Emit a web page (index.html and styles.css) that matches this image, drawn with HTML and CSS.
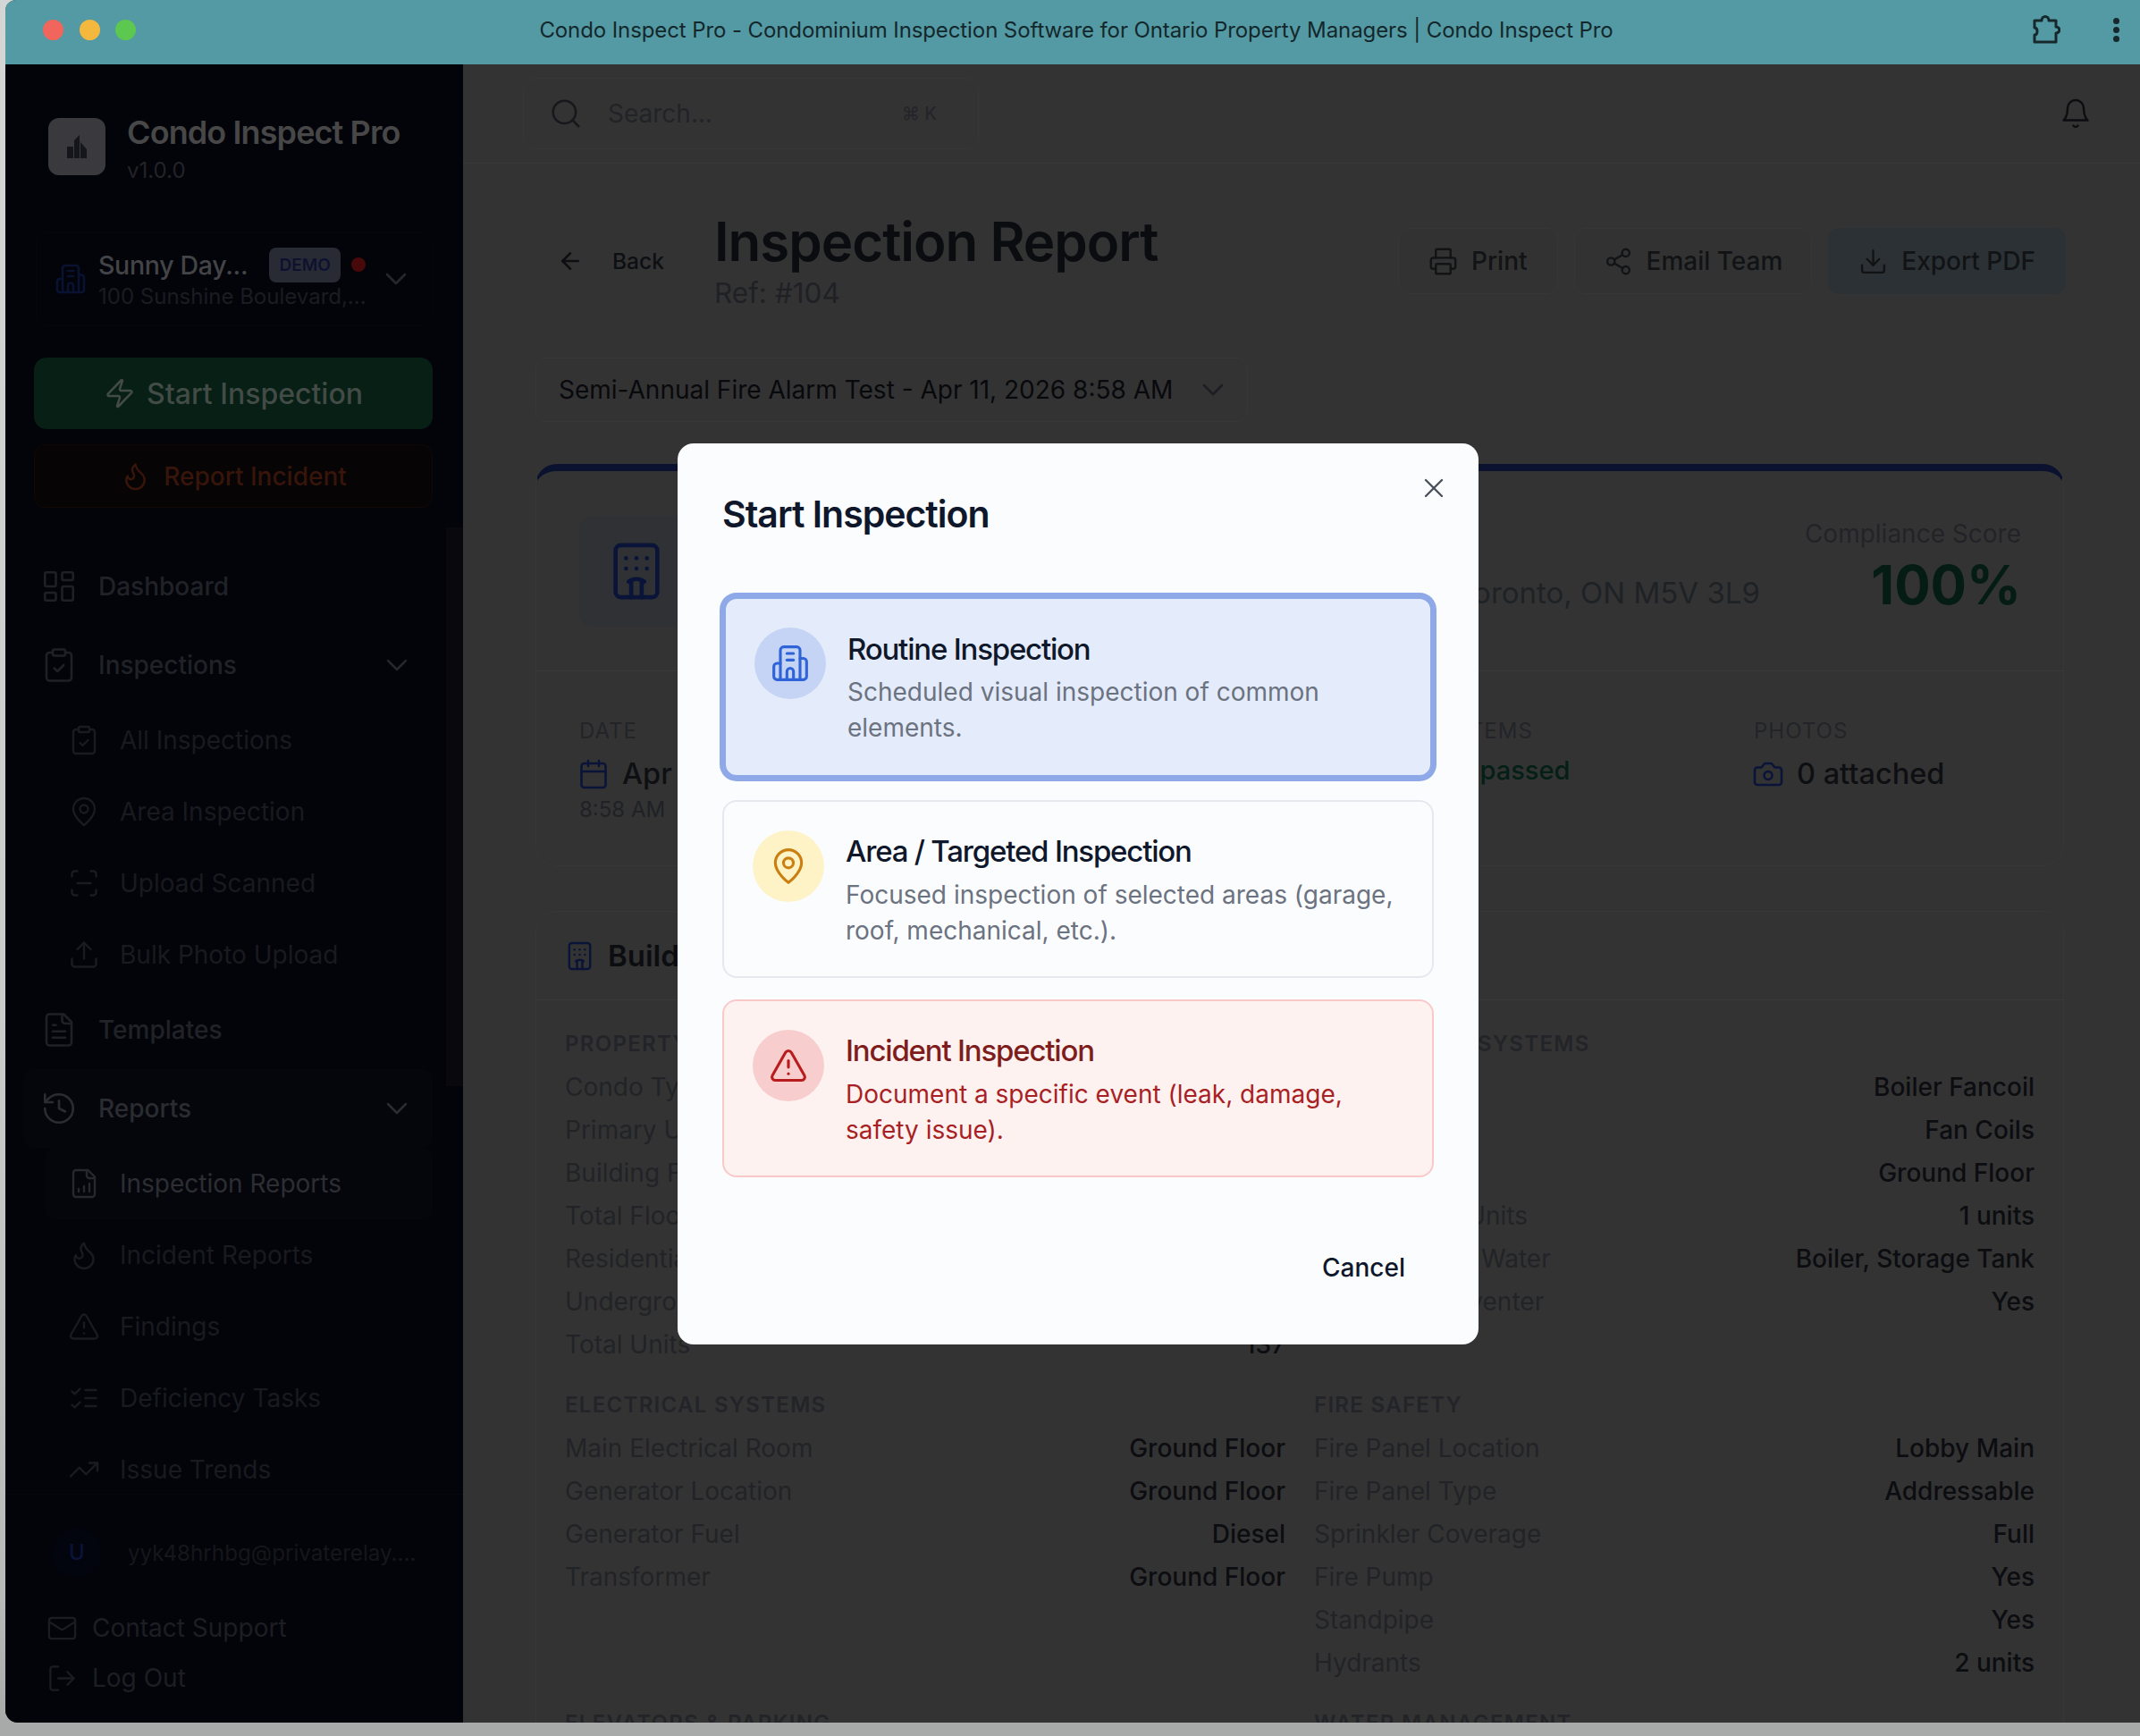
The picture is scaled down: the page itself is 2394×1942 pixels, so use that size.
FILE: index.html
```html
<!DOCTYPE html>
<html lang="en">
<head>
    <meta charset="UTF-8">
    <meta name="viewport" content="width=device-width, initial-scale=1.0">
    <title>Condo Inspect Pro</title>
    <link rel="stylesheet" href="styles.css">
</head>
<body>
    <svg class="sprite" xmlns="http://www.w3.org/2000/svg">
        <symbol id="i-search" viewBox="0 0 24 24"><circle cx="11" cy="11" r="8"/><path d="m21 21-4.3-4.3"/></symbol>
        <symbol id="i-bell" viewBox="0 0 24 24"><path d="M6 8a6 6 0 0 1 12 0c0 7 3 9 3 9H3s3-2 3-9"/><path d="M10.3 21a1.94 1.94 0 0 0 3.4 0"/></symbol>
        <symbol id="i-back" viewBox="0 0 24 24"><path d="m12 19-7-7 7-7"/><path d="M19 12H5"/></symbol>
        <symbol id="i-print" viewBox="0 0 24 24"><path d="M6 18H4a2 2 0 0 1-2-2v-5a2 2 0 0 1 2-2h16a2 2 0 0 1 2 2v5a2 2 0 0 1-2 2h-2"/><path d="M6 9V3a1 1 0 0 1 1-1h10a1 1 0 0 1 1 1v6"/><rect x="6" y="14" width="12" height="8" rx="1"/></symbol>
        <symbol id="i-share" viewBox="0 0 24 24"><circle cx="18" cy="5" r="3"/><circle cx="6" cy="12" r="3"/><circle cx="18" cy="19" r="3"/><path d="m8.59 13.51 6.83 3.98"/><path d="m15.41 6.51-6.82 3.98"/></symbol>
        <symbol id="i-download" viewBox="0 0 24 24"><path d="M21 15v4a2 2 0 0 1-2 2H5a2 2 0 0 1-2-2v-4"/><path d="m7 10 5 5 5-5"/><path d="M12 15V3"/></symbol>
        <symbol id="i-chevron" viewBox="0 0 24 24"><path d="m6 9 6 6 6-6"/></symbol>
        <symbol id="i-zap" viewBox="0 0 24 24"><path d="M4 14a1 1 0 0 1-.78-1.63l9.9-10.2a.5.5 0 0 1 .86.46l-1.92 6.02A1 1 0 0 0 13 10h7a1 1 0 0 1 .78 1.63l-9.9 10.2a.5.5 0 0 1-.86-.46l1.92-6.02A1 1 0 0 0 11 14z"/></symbol>
        <symbol id="i-flame" viewBox="0 0 24 24"><path d="M8.5 14.5A2.5 2.5 0 0 0 11 12c0-1.38-.5-2-1-3-1.072-2.143-.224-4.054 2-6 .5 2.5 2 4.9 4 6.5 2 1.6 3 3.5 3 5.5a7 7 0 1 1-14 0c0-1.153.433-2.294 1-3a2.5 2.5 0 0 0 2.5 2.5z"/></symbol>
        <symbol id="i-dash" viewBox="0 0 24 24"><rect x="3" y="3" width="7" height="9" rx="1"/><rect x="14" y="3" width="7" height="5" rx="1"/><rect x="14" y="12" width="7" height="9" rx="1"/><rect x="3" y="16" width="7" height="5" rx="1"/></symbol>
        <symbol id="i-clip" viewBox="0 0 24 24"><rect x="8" y="2" width="8" height="4" rx="1"/><path d="M16 4h2a2 2 0 0 1 2 2v14a2 2 0 0 1-2 2H6a2 2 0 0 1-2-2V6a2 2 0 0 1 2-2h2"/><path d="m9 14 2 2 4-4"/></symbol>
        <symbol id="i-pin" viewBox="0 0 24 24"><path d="M20 10c0 6-8 12-8 12s-8-6-8-12a8 8 0 0 1 16 0Z"/><circle cx="12" cy="10" r="3"/></symbol>
        <symbol id="i-scan" viewBox="0 0 24 24"><path d="M3 7V5a2 2 0 0 1 2-2h2"/><path d="M17 3h2a2 2 0 0 1 2 2v2"/><path d="M21 17v2a2 2 0 0 1-2 2h-2"/><path d="M7 21H5a2 2 0 0 1-2-2v-2"/><path d="M7 12h10"/></symbol>
        <symbol id="i-upload" viewBox="0 0 24 24"><path d="M21 15v4a2 2 0 0 1-2 2H5a2 2 0 0 1-2-2v-4"/><path d="m17 8-5-5-5 5"/><path d="M12 3v12"/></symbol>
        <symbol id="i-file" viewBox="0 0 24 24"><path d="M15 2H6a2 2 0 0 0-2 2v16a2 2 0 0 0 2 2h12a2 2 0 0 0 2-2V7Z"/><path d="M14 2v4a2 2 0 0 0 2 2h4"/><path d="M10 9H8"/><path d="M16 13H8"/><path d="M16 17H8"/></symbol>
        <symbol id="i-history" viewBox="0 0 24 24"><path d="M3 12a9 9 0 1 0 9-9 9.75 9.75 0 0 0-6.74 2.74L3 8"/><path d="M3 3v5h5"/><path d="M12 7v5l4 2"/></symbol>
        <symbol id="i-chart" viewBox="0 0 24 24"><path d="M15 2H6a2 2 0 0 0-2 2v16a2 2 0 0 0 2 2h12a2 2 0 0 0 2-2V7Z"/><path d="M14 2v4a2 2 0 0 0 2 2h4"/><path d="M8 18v-2"/><path d="M12 18v-4"/><path d="M16 18v-6"/></symbol>
        <symbol id="i-alert" viewBox="0 0 24 24"><path d="m21.73 18-8-14a2 2 0 0 0-3.48 0l-8 14A2 2 0 0 0 4 21h16a2 2 0 0 0 1.73-3"/><path d="M12 9v4"/><path d="M12 17h.01"/></symbol>
        <symbol id="i-tasks" viewBox="0 0 24 24"><path d="m3 17 2 2 4-4"/><path d="m3 7 2 2 4-4"/><path d="M13 6h8"/><path d="M13 12h8"/><path d="M13 18h8"/></symbol>
        <symbol id="i-trend" viewBox="0 0 24 24"><path d="M22 7 13.5 15.5l-5-5L2 17"/><path d="M16 7h6v6"/></symbol>
        <symbol id="i-mail" viewBox="0 0 24 24"><rect x="2" y="4" width="20" height="16" rx="2"/><path d="m22 7-8.97 5.7a1.94 1.94 0 0 1-2.06 0L2 7"/></symbol>
        <symbol id="i-logout" viewBox="0 0 24 24"><path d="M9 21H5a2 2 0 0 1-2-2V5a2 2 0 0 1 2-2h4"/><path d="m16 17 5-5-5-5"/><path d="M21 12H9"/></symbol>
        <symbol id="i-building" viewBox="0 0 24 24"><path d="M6 22V4a2 2 0 0 1 2-2h8a2 2 0 0 1 2 2v18Z"/><path d="M6 12H4a2 2 0 0 0-2 2v6a2 2 0 0 0 2 2h2"/><path d="M18 9h2a2 2 0 0 1 2 2v9a2 2 0 0 1-2 2h-2"/><path d="M10 6h4"/><path d="M10 10h4"/><path d="M10 22v-5a2 2 0 0 1 4 0v5"/></symbol>
        <symbol id="i-hotel" viewBox="0 0 24 24"><rect x="4" y="2" width="16" height="20" rx="2"/><path d="M10 22v-6.57"/><path d="M14 15.43V22"/><path d="M15 16a5 5 0 0 0-6 0"/><path d="M8 7h.01"/><path d="M12 7h.01"/><path d="M16 7h.01"/><path d="M8 11h.01"/><path d="M12 11h.01"/><path d="M16 11h.01"/></symbol>
        <symbol id="i-calendar" viewBox="0 0 24 24"><path d="M8 2v4"/><path d="M16 2v4"/><rect x="3" y="4" width="18" height="18" rx="2"/><path d="M3 10h18"/></symbol>
        <symbol id="i-camera" viewBox="0 0 24 24"><path d="M14.5 4h-5L7 7H4a2 2 0 0 0-2 2v9a2 2 0 0 0 2 2h16a2 2 0 0 0 2-2V9a2 2 0 0 0-2-2h-3z"/><circle cx="12" cy="13" r="3"/></symbol>
        <symbol id="i-x" viewBox="0 0 24 24"><path d="M18 6 6 18"/><path d="m6 6 12 12"/></symbol>
    </svg>

    <div class="window">
        <div class="titlebar">
            <div class="lights">
                <span class="light red"></span>
                <span class="light yellow"></span>
                <span class="light green"></span>
            </div>
            <div class="window-title">Condo Inspect Pro - Condominium Inspection Software for Ontario Property Managers | Condo Inspect Pro</div>
            <svg class="puzzle" viewBox="0 0 32 36"><path d="M3 8h8c0-6 8-6 8 0h8v7c5 0 5 7 0 7v10H3v-8c4 0 4-8 0-8z"/></svg>
            <div class="kebab"><span></span><span></span><span></span></div>
        </div>

        <div class="app">
            <aside class="sidebar">
                <div class="scroll-track"></div>
                <div class="brand">
                    <div class="brand-logo">
                        <svg viewBox="0 0 24 28" class="brand-mark"><path d="M1 14h7v13H1zM9 7l6-6v26H9zM16 9l7 8v10h-7z"/></svg>
                    </div>
                    <div>
                        <div class="brand-name">Condo Inspect Pro</div>
                        <div class="brand-version">v1.0.0</div>
                    </div>
                </div>

                <div class="property-picker">
                    <svg class="ico picker-icon"><use href="#i-building"/></svg>
                    <div class="picker-text">
                        <div class="picker-top">
                            <span class="picker-name">Sunny Day...</span>
                            <span class="badge">DEMO</span>
                            <span class="dot"></span>
                        </div>
                        <div class="picker-addr">100 Sunshine Boulevard,...</div>
                    </div>
                    <svg class="ico picker-chevron"><use href="#i-chevron"/></svg>
                </div>

                <button class="btn-start"><svg class="ico"><use href="#i-zap"/></svg>Start Inspection</button>
                <button class="btn-incident"><svg class="ico"><use href="#i-flame"/></svg>Report Incident</button>

                <nav class="nav">
                    <a class="nav-item"><svg class="ico"><use href="#i-dash"/></svg>Dashboard</a>
                    <a class="nav-item"><svg class="ico"><use href="#i-clip"/></svg>Inspections<svg class="ico nav-chevron"><use href="#i-chevron"/></svg></a>
                    <a class="nav-sub"><svg class="ico"><use href="#i-clip"/></svg>All Inspections</a>
                    <a class="nav-sub"><svg class="ico"><use href="#i-pin"/></svg>Area Inspection</a>
                    <a class="nav-sub"><svg class="ico"><use href="#i-scan"/></svg>Upload Scanned</a>
                    <a class="nav-sub"><svg class="ico"><use href="#i-upload"/></svg>Bulk Photo Upload</a>
                    <a class="nav-item"><svg class="ico"><use href="#i-file"/></svg>Templates</a>
                    <a class="nav-item active"><svg class="ico"><use href="#i-history"/></svg>Reports<svg class="ico nav-chevron"><use href="#i-chevron"/></svg></a>
                    <a class="nav-sub active"><svg class="ico"><use href="#i-chart"/></svg>Inspection Reports</a>
                    <a class="nav-sub"><svg class="ico"><use href="#i-flame"/></svg>Incident Reports</a>
                    <a class="nav-sub"><svg class="ico"><use href="#i-alert"/></svg>Findings</a>
                    <a class="nav-sub"><svg class="ico"><use href="#i-tasks"/></svg>Deficiency Tasks</a>
                    <a class="nav-sub"><svg class="ico"><use href="#i-trend"/></svg>Issue Trends</a>
                </nav>

                <div class="side-footer">
                    <div class="user-row">
                        <span class="avatar">U</span>
                        <span class="user-mail">yyk48hrhbg@privaterelay....</span>
                    </div>
                    <a class="foot-link"><svg class="ico"><use href="#i-mail"/></svg>Contact Support</a>
                    <a class="foot-link"><svg class="ico"><use href="#i-logout"/></svg>Log Out</a>
                </div>
            </aside>

            <main class="main">
                <header class="topbar">
                    <div class="search">
                        <svg class="ico"><use href="#i-search"/></svg>
                        <span class="search-text">Search...</span>
                        <span class="kbd">⌘ K</span>
                    </div>
                    <svg class="ico bell"><use href="#i-bell"/></svg>
                </header>

                <div class="content">
                    <div class="page-head">
                        <a class="back"><svg class="ico"><use href="#i-back"/></svg>Back</a>
                        <div class="page-title">
                            <h1>Inspection Report</h1>
                            <div class="ref">Ref: #104</div>
                        </div>
                        <div class="actions">
                            <button class="btn-outline"><svg class="ico"><use href="#i-print"/></svg>Print</button>
                            <button class="btn-outline btn-email"><svg class="ico"><use href="#i-share"/></svg>Email Team</button>
                            <button class="btn-outline btn-export"><svg class="ico"><use href="#i-download"/></svg>Export PDF</button>
                        </div>
                    </div>

                    <div class="report-select">
                        <span>Semi-Annual Fire Alarm Test - Apr 11, 2026 8:58 AM</span>
                        <svg class="ico"><use href="#i-chevron"/></svg>
                    </div>

                    <section class="report-card">
                        <div class="report-top">
                            <div class="report-logo"><svg class="ico"><use href="#i-hotel"/></svg></div>
                            <div class="report-info">
                                <div class="report-addr">100 Sunshine Boulevard, Toronto, ON M5V 3L9</div>
                            </div>
                            <div class="score">
                                <div class="score-label">Compliance Score</div>
                                <div class="score-value">100%</div>
                            </div>
                        </div>
                        <div class="stats">
                            <div>
                                <div class="stat-label">DATE</div>
                                <div class="stat-value"><svg class="ico"><use href="#i-calendar"/></svg>Apr 11, 2026</div>
                                <div class="stat-sub">8:58 AM</div>
                            </div>
                            <div>
                                <div class="stat-label">INSPECTOR</div>
                                <div class="stat-value">Property Manager</div>
                            </div>
                            <div class="stat-items">
                                <div class="stat-label">PASSED ITEMS</div>
                                <div class="stat-passed">12 of 12 passed</div>
                            </div>
                            <div>
                                <div class="stat-label">PHOTOS</div>
                                <div class="stat-value"><svg class="ico"><use href="#i-camera"/></svg>0 attached</div>
                            </div>
                        </div>
                    </section>

                    <section class="details-card">
                        <div class="details-head">
                            <svg class="ico"><use href="#i-hotel"/></svg>
                            <h3>Building Details</h3>
                        </div>
                        <div class="details-grid">
                            <div class="group">
                                <h4>PROPERTY</h4>
                                <div class="row"><span>Condo Type</span><b>High Rise</b></div>
                                <div class="row"><span>Primary Use</span><b>Residential</b></div>
                                <div class="row"><span>Building Form</span><b>Tower</b></div>
                                <div class="row"><span>Total Floors</span><b>24</b></div>
                                <div class="row"><span>Residential Floors</span><b>22</b></div>
                                <div class="row"><span>Underground Levels</span><b>2</b></div>
                                <div class="row"><span>Total Units</span><b>137</b></div>
                            </div>
                            <div class="group">
                                <h4>MECHANICAL SYSTEMS</h4>
                                <div class="row"><span>Heating Type</span><b>Boiler Fancoil</b></div>
                                <div class="row"><span>Cooling Type</span><b>Fan Coils</b></div>
                                <div class="row"><span>Boiler Room</span><b>Ground Floor</b></div>
                                <div class="row"><span>Make-up Air Units</span><b>1 units</b></div>
                                <div class="row"><span>Domestic Hot Water</span><b>Boiler, Storage Tank</b></div>
                                <div class="row"><span>Backflow Preventer</span><b>Yes</b></div>
                            </div>
                            <div class="group">
                                <h4>ELECTRICAL SYSTEMS</h4>
                                <div class="row"><span>Main Electrical Room</span><b>Ground Floor</b></div>
                                <div class="row"><span>Generator Location</span><b>Ground Floor</b></div>
                                <div class="row"><span>Generator Fuel</span><b>Diesel</b></div>
                                <div class="row"><span>Transformer</span><b>Ground Floor</b></div>
                            </div>
                            <div class="group">
                                <h4>FIRE SAFETY</h4>
                                <div class="row"><span>Fire Panel Location</span><b>Lobby Main</b></div>
                                <div class="row"><span>Fire Panel Type</span><b>Addressable</b></div>
                                <div class="row"><span>Sprinkler Coverage</span><b>Full</b></div>
                                <div class="row"><span>Fire Pump</span><b>Yes</b></div>
                                <div class="row"><span>Standpipe</span><b>Yes</b></div>
                                <div class="row"><span>Hydrants</span><b>2 units</b></div>
                            </div>
                            <div class="group">
                                <h4>ELEVATORS &amp; PARKING</h4>
                            </div>
                            <div class="group">
                                <h4>WATER MANAGEMENT</h4>
                            </div>
                        </div>
                    </section>
                </div>
            </main>

            <div class="backdrop">
                <div class="modal">
                    <svg class="ico modal-close"><use href="#i-x"/></svg>
                    <h2>Start Inspection</h2>
                    <div class="options">
                        <div class="option routine">
                            <span class="opt-icon"><svg class="ico"><use href="#i-building"/></svg></span>
                            <div>
                                <div class="opt-title">Routine Inspection</div>
                                <div class="opt-desc">Scheduled visual inspection of common elements.</div>
                            </div>
                        </div>
                        <div class="option area">
                            <span class="opt-icon"><svg class="ico"><use href="#i-pin"/></svg></span>
                            <div>
                                <div class="opt-title">Area / Targeted Inspection</div>
                                <div class="opt-desc">Focused inspection of selected areas (garage, roof, mechanical, etc.).</div>
                            </div>
                        </div>
                        <div class="option incident">
                            <span class="opt-icon"><svg class="ico"><use href="#i-alert"/></svg></span>
                            <div>
                                <div class="opt-title">Incident Inspection</div>
                                <div class="opt-desc">Document a specific event (leak, damage, safety issue).</div>
                            </div>
                        </div>
                    </div>
                    <div class="modal-foot">
                        <button class="btn-cancel">Cancel</button>
                    </div>
                </div>
            </div>
        </div>
    </div>
</body>
</html>
```

FILE: styles.css
```css
* {
    box-sizing: border-box;
}

html, body {
    height: 100%;
}

body {
    margin: 0;
    overflow: hidden;
    font-family: 'Inter', 'Liberation Sans', sans-serif;
    background: linear-gradient(180deg, #d4d6d6 0%, #c9cbcb 60%, #b8b9b9 92%, #a8a9a9 99.3%);
}

.sprite {
    display: none;
}

.ico {
    fill: none;
    stroke: currentColor;
    stroke-width: 2;
    stroke-linecap: round;
    stroke-linejoin: round;
    flex: none;
}

button {
    font-family: inherit;
    cursor: pointer;
}

/* Window frame */
.window {
    margin-left: 6px;
    width: 2400px;
    height: 1927px;
    display: flex;
    flex-direction: column;
    border-radius: 12px 0 0 14px;
    overflow: hidden;
    background: #333334;
}

.titlebar {
    height: 72px;
    flex: none;
    display: flex;
    align-items: center;
    position: relative;
    background: #539aa4;
}

.lights {
    display: flex;
    gap: 17.5px;
    margin: -6px 0 0 42px;
}

.light {
    width: 23px;
    height: 23px;
    border-radius: 50%;
}

.red { background: #f0665c; }
.yellow { background: #f5b83f; }
.green { background: #5cc84f; }

.window-title {
    position: absolute;
    left: 0;
    right: 4px;
    top: 0;
    line-height: 68px;
    text-align: center;
    font-size: 24px;
    letter-spacing: -0.1px;
    color: #14272b;
}

.puzzle {
    position: absolute;
    left: 2267px;
    top: 15px;
    width: 32px;
    height: 36px;
    fill: none;
    stroke: #17282c;
    stroke-width: 3;
    stroke-linejoin: round;
}

.kebab {
    position: absolute;
    left: 2358px;
    top: 20px;
    display: flex;
    flex-direction: column;
    gap: 3px;
}

.kebab span {
    width: 7px;
    height: 7px;
    border-radius: 50%;
    background: #17282c;
}

.app {
    flex: 1;
    min-height: 0;
    display: flex;
    position: relative;
}

/* Sidebar */
.sidebar {
    width: 512px;
    flex: none;
    display: flex;
    flex-direction: column;
    position: relative;
    background: #030409;
    padding-top: 60px;
}

.scroll-track {
    position: absolute;
    right: 0;
    top: 518px;
    width: 19px;
    height: 625px;
    background: #09090d;
}

.brand {
    display: flex;
    gap: 24px;
    margin-left: 48px;
    height: 64px;
}

.brand-logo {
    width: 64px;
    height: 64px;
    border-radius: 12px;
    background: #3a3a3e;
    display: flex;
    align-items: center;
    justify-content: center;
}

.brand-mark {
    width: 24px;
    height: 30px;
    fill: #15161b;
}

.brand-name {
    font-size: 36px;
    line-height: 44px;
    margin-top: -6px;
    font-weight: 600;
    letter-spacing: -0.9px;
    color: #474748;
}

.brand-version {
    font-size: 24px;
    line-height: 30px;
    margin-top: 6px;
    color: #222327;
}

.property-picker {
    margin: 64px 34px 0 34px;
    height: 104px;
    padding: 0 20px 0 20px;
    display: flex;
    align-items: center;
    border: 1px solid #06070c;
    border-radius: 12px;
}

.picker-icon {
    width: 36px;
    height: 36px;
    color: #0a1232;
    stroke-width: 1.8;
}

.picker-text {
    margin-left: 13px;
    flex: 1;
}

.picker-top {
    display: flex;
    align-items: center;
    height: 40px;
}

.picker-name {
    font-size: 28.5px;
    font-weight: 500;
    color: #434447;
    letter-spacing: -0.3px;
}

.badge {
    margin-left: 24px;
    width: 80px;
    height: 39px;
    line-height: 39px;
    text-align: center;
    border-radius: 8px;
    background: #282b33;
    color: #0d1230;
    font-size: 19px;
    font-weight: 600;
}

.dot {
    margin-left: 12px;
    width: 16px;
    height: 16px;
    border-radius: 50%;
    background: #470909;
}

.picker-addr {
    font-size: 24px;
    line-height: 32px;
    color: #1a1c21;
}

.picker-chevron {
    width: 40px;
    height: 40px;
    color: #26272c;
    stroke-width: 1.6;
}

.btn-start {
    margin: 36px 34px 0 32px;
    height: 80px;
    border: none;
    border-radius: 14px;
    background: #071f15;
    color: #424b45;
    font-size: 32px;
    font-weight: 500;
    display: flex;
    align-items: center;
    justify-content: center;
    gap: 12px;
}

.btn-start .ico {
    width: 36px;
    height: 36px;
    stroke-width: 1.7;
}

.btn-incident {
    margin: 17px 34px 0 32px;
    height: 71px;
    border: 1px solid #120805;
    border-radius: 12px;
    background: #060405;
    color: #38150a;
    font-size: 28px;
    font-weight: 500;
    display: flex;
    align-items: center;
    justify-content: center;
    gap: 14px;
}

.btn-incident .ico {
    width: 35px;
    height: 35px;
    stroke-width: 1.7;
}

.nav {
    margin: 44px 34px 0 20px;
    flex: 1;
    min-height: 0;
    overflow: hidden;
}

.nav-item {
    height: 88px;
    display: flex;
    align-items: center;
    padding: 0 20px 0 19px;
    gap: 23px;
    font-size: 28px;
    font-weight: 500;
    color: #202227;
    border-radius: 12px;
}

.nav-item .ico {
    width: 42px;
    height: 42px;
    color: #1e2025;
    stroke-width: 1.5;
}

.nav-item .nav-chevron {
    width: 40px;
    height: 40px;
    margin-left: auto;
    color: #26272c;
}

.nav-item.active {
    background: #05060c;
    color: #2a2c31;
}

.nav-item.active .ico {
    color: #2a2c31;
}

.nav-sub {
    height: 80px;
    margin-left: 24px;
    display: flex;
    align-items: center;
    padding-left: 26px;
    gap: 22px;
    font-size: 28px;
    color: #181a1f;
    border-radius: 12px;
}

.nav-sub .ico {
    width: 36px;
    height: 36px;
    color: #191b20;
    stroke-width: 1.6;
}

.nav-sub.active {
    background: #05060c;
    color: #2c2e33;
}

.nav-sub.active .ico {
    color: #26282d;
}

.side-footer {
    flex: none;
    height: 256px;
    border-top: 1px solid #07080d;
    padding-top: 37px;
}

.user-row {
    display: flex;
    align-items: center;
    margin: 0 0 28px 52px;
    height: 56px;
    gap: 29px;
}

.avatar {
    width: 56px;
    height: 56px;
    border-radius: 50%;
    background: #02040e;
    color: #0b1338;
    font-size: 24px;
    font-weight: 500;
    text-align: center;
    line-height: 56px;
}

.user-mail {
    font-size: 24.2px;
    color: #15161b;
}

.foot-link {
    display: flex;
    align-items: center;
    height: 56px;
    margin-left: 46px;
    gap: 16px;
    font-size: 28px;
    color: #1c1e23;
}

.foot-link .ico {
    width: 35px;
    height: 35px;
    color: #1a1c21;
    stroke-width: 1.6;
}

/* Main column */
.main {
    flex: 1;
    min-width: 0;
    overflow: hidden;
}

.topbar {
    height: 111px;
    display: flex;
    align-items: center;
    justify-content: space-between;
    padding: 0 66px 0 67px;
    border-bottom: 1px solid #393939;
}

.search {
    width: 510px;
    height: 80px;
    display: flex;
    align-items: center;
    padding: 0 46px 0 28px;
    border: 1px solid #373737;
    border-radius: 14px;
}

.search .ico {
    width: 38px;
    height: 38px;
    color: #17181b;
    stroke-width: 1.6;
}

.search-text {
    margin-left: 28px;
    font-size: 28px;
    color: #222326;
}

.kbd {
    margin-left: auto;
    font-size: 20px;
    font-weight: 500;
    color: #242528;
}

.bell {
    width: 36px;
    height: 36px;
    color: #0c0d10;
    stroke-width: 1.6;
}

.content {
    padding: 52px 97px 0 81px;
}

.page-head {
    display: flex;
    align-items: center;
}

.back {
    display: flex;
    align-items: center;
    gap: 32px;
    padding-left: 24px;
    width: 200px;
    font-size: 24.5px;
    font-weight: 500;
    color: #0e0f12;
}

.back .ico {
    width: 30px;
    height: 30px;
}

h1 {
    margin: 0 0 2px;
    font-size: 60px;
    line-height: 70px;
    font-weight: 600;
    letter-spacing: -1px;
    color: #0a0c10;
}

.ref {
    font-size: 31.5px;
    line-height: 42px;
    color: #1f2124;
}

.actions {
    margin-left: auto;
    display: flex;
    gap: 18px;
    margin-right: -2px;
}

.btn-outline {
    height: 74px;
    padding: 0 33px;
    display: flex;
    align-items: center;
    gap: 15px;
    background: #323233;
    border: 1px solid #373737;
    border-radius: 12px;
    font-size: 28px;
    font-weight: 500;
    color: #111315;
}

.btn-outline .ico {
    width: 33px;
    height: 33px;
    stroke-width: 1.7;
}

.btn-email {
    padding: 0 32px;
}

.btn-export {
    background: #2c3135;
    border-color: #2c3135;
}

.report-select {
    margin-top: 51px;
    width: 797px;
    height: 72px;
    display: flex;
    align-items: center;
    justify-content: space-between;
    padding: 0 18px 0 25px;
    border: 1px solid #373737;
    border-radius: 12px;
    font-size: 28px;
    color: #08090c;
}

.report-select .ico {
    width: 40px;
    height: 40px;
    color: #1d1e21;
    stroke-width: 1.6;
}

.report-card {
    margin-top: 47px;
    height: 450px;
    border: 1px solid #373737;
    border-top: 8px solid #0a1230;
    border-radius: 24px;
}

.report-top {
    height: 224px;
    display: flex;
    align-items: center;
    padding: 0 47px 0 48px;
    border-bottom: 1px solid #393939;
}

.report-logo {
    width: 128px;
    height: 124px;
    border-radius: 16px;
    background: #303135;
    display: flex;
    align-items: center;
    justify-content: center;
    color: #0a1438;
}

.report-logo .ico {
    width: 70px;
    height: 70px;
    stroke-width: 1.6;
}

.report-info {
    flex: 1;
    text-align: right;
    padding-right: 50px;
}

.report-addr {
    margin-top: 48px;
    font-size: 33px;
    color: #1f2225;
}

.score {
    text-align: right;
    margin-top: -8px;
}

.score-label {
    font-size: 28px;
    color: #232327;
}

.score-value {
    font-size: 60px;
    line-height: 72px;
    margin-top: 4px;
    font-weight: 700;
    color: #041c14;
}

.stats {
    display: grid;
    grid-template-columns: repeat(4, 298px);
    column-gap: 140px;
    padding: 52px 47px 0 48px;
}

.stat-label {
    font-size: 24px;
    line-height: 30px;
    letter-spacing: 1px;
    color: #232428;
}

.stat-value {
    margin-top: 11px;
    display: flex;
    align-items: center;
    gap: 14px;
    font-size: 32.5px;
    line-height: 44px;
    font-weight: 500;
    color: #0e0f12;
}

.stat-value .ico {
    width: 36px;
    height: 36px;
    margin-left: -2px;
    color: #0a1438;
    stroke-width: 1.7;
}

.stat-sub {
    font-size: 24px;
    line-height: 36px;
    color: #1f2124;
}

.stat-items {
    padding-left: 6px;
}

.stat-passed {
    margin: 7px 0 0 14px;
    font-size: 29px;
    line-height: 44px;
    font-weight: 500;
    color: #041f15;
}

.details-card {
    margin-top: 50px;
    border: 1px solid #373737;
    border-radius: 24px;
}

.details-head {
    height: 99px;
    display: flex;
    align-items: center;
    gap: 14px;
    padding-left: 31px;
    border-bottom: 1px solid #393939;
}

.details-head .ico {
    width: 35px;
    height: 35px;
    color: #0a1438;
    stroke-width: 1.7;
}

h3 {
    margin: 0;
    font-size: 33px;
    font-weight: 600;
    color: #0c0d10;
}

.details-grid {
    display: grid;
    grid-template-columns: 1fr 1fr;
    column-gap: 32px;
    row-gap: 29px;
    padding: 34px 32px;
}

h4 {
    margin: 0 0 9px;
    font-size: 24px;
    line-height: 30px;
    font-weight: 600;
    letter-spacing: 1.3px;
    color: #232428;
}

.row {
    height: 48px;
    display: flex;
    align-items: center;
    justify-content: space-between;
    font-size: 28px;
    color: #222326;
}

.row b {
    font-weight: 500;
    color: #0c0d10;
}

/* Modal */
.backdrop {
    position: absolute;
    inset: 0;
    display: flex;
    align-items: center;
    justify-content: center;
}

.modal {
    position: relative;
    width: 896px;
    height: 1008px;
    padding: 53px 50px 50px;
    border-radius: 18px;
    background: #fbfcfe;
}

.modal-close {
    position: absolute;
    top: 32px;
    right: 32px;
    width: 36px;
    height: 36px;
    stroke-width: 1.6;
    color: #4a515b;
}

h2 {
    margin: 0;
    font-size: 41px;
    line-height: 52px;
    font-weight: 600;
    letter-spacing: -1px;
    color: #0f172a;
}

.options {
    margin-top: 65px;
    display: flex;
    flex-direction: column;
    gap: 24px;
}

.option {
    display: flex;
    gap: 24px;
    padding: 32px 34px 31px 32px;
    border: 2px solid #e5e8ee;
    border-radius: 16px;
}

.opt-icon {
    width: 80px;
    height: 80px;
    flex: none;
    border-radius: 50%;
    display: flex;
    align-items: center;
    justify-content: center;
}

.opt-icon .ico {
    width: 44px;
    height: 44px;
    stroke-width: 1.7;
}

.opt-title {
    font-size: 33px;
    line-height: 47px;
    font-weight: 500;
    letter-spacing: -1.2px;
    color: #0f172a;
    margin-bottom: 5px;
}

.opt-desc {
    font-size: 28px;
    line-height: 40px;
    color: #6b7280;
}

.routine {
    border: 4px solid #8fa9e8;
    padding-bottom: 33px;
    background: #e4ebfb;
    box-shadow: 0 0 0 3px #8fa9e8;
}

.routine .opt-title {
    margin: 1px 0 4px;
}

.routine .opt-icon {
    background: #c5d4f5;
    color: #2f63d8;
}

.area .opt-icon {
    background: #fdf3c7;
    color: #ca7f10;
}

.incident {
    border-color: #f9c9c9;
    background: #fef2f1;
}

.incident .opt-icon {
    background: #f8cdcd;
    color: #b91c1c;
}

.incident .opt-title {
    color: #7f1d1d;
}

.incident .opt-desc {
    color: #a81f24;
}

.modal-foot {
    margin-top: 65px;
    display: flex;
    justify-content: flex-end;
}

.btn-cancel {
    height: 72px;
    padding: 0 32px;
    border: none;
    background: none;
    font-size: 28px;
    font-weight: 500;
    color: #0f172a;
}
```
